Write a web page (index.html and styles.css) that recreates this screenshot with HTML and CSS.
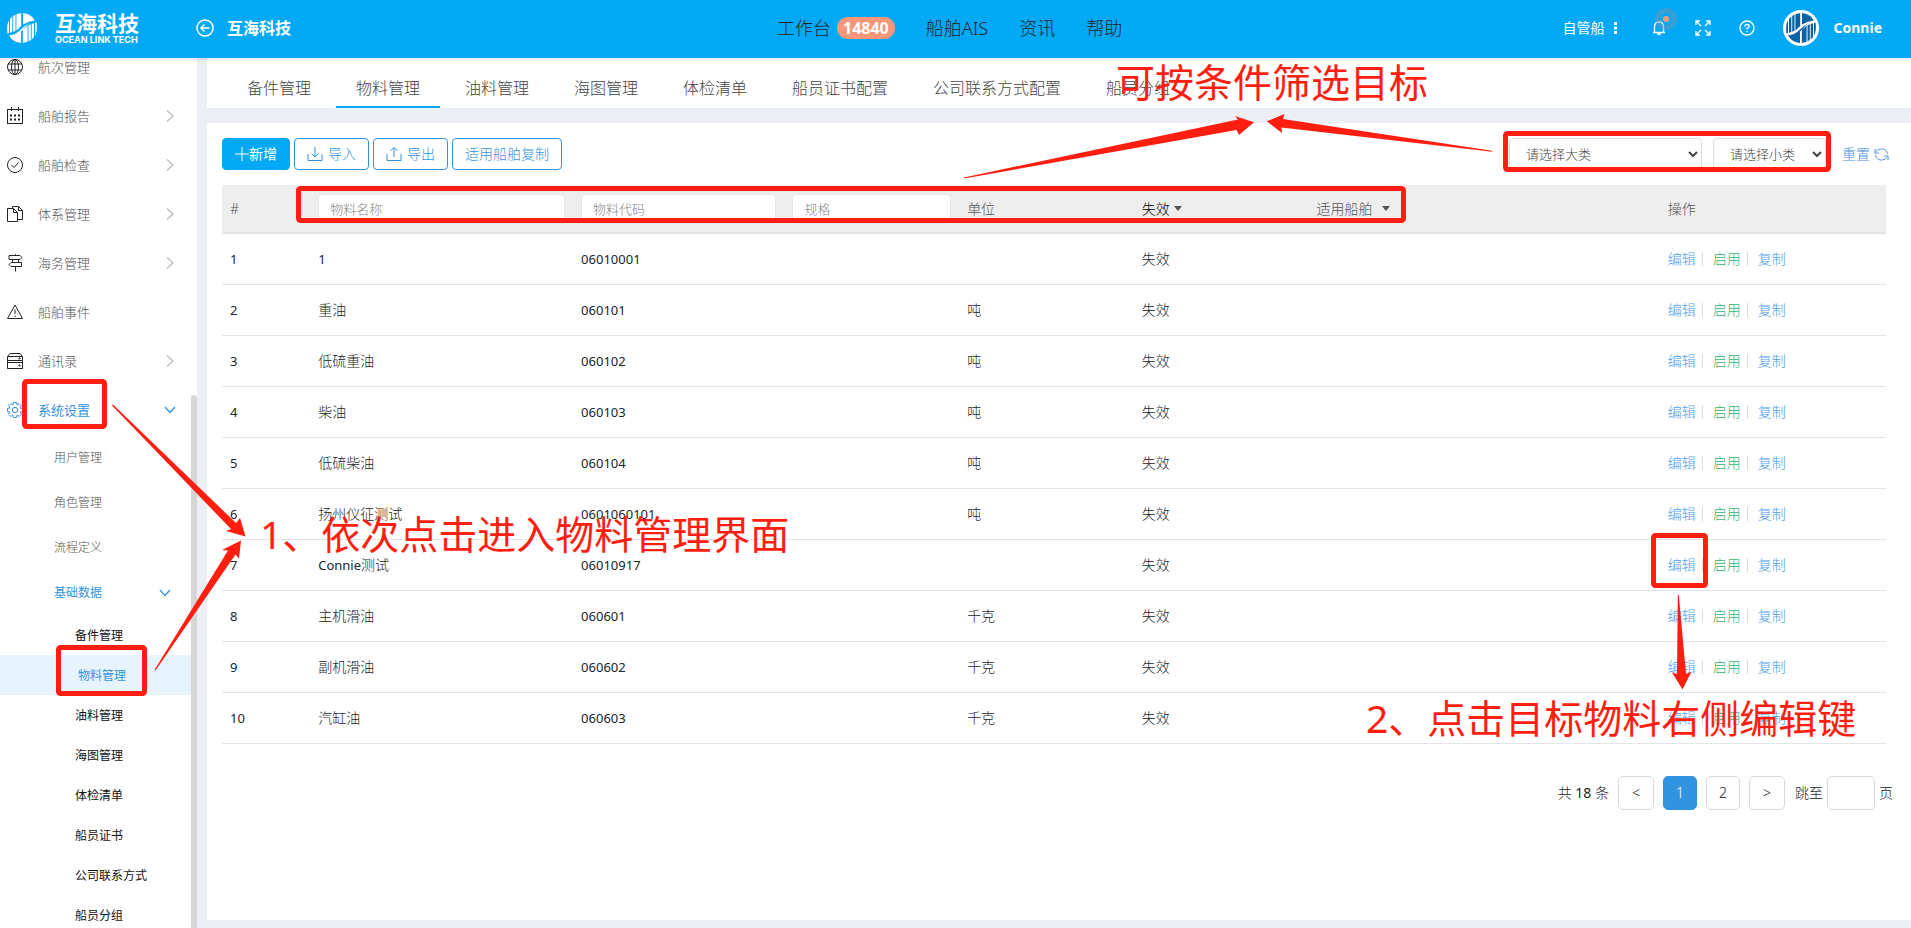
FILE: index.html
```html
<!DOCTYPE html>
<html lang="zh-CN">
<head>
<meta charset="utf-8">
<title>互海科技 - 物料管理</title>
<link rel="stylesheet" href="styles.css">
</head>
<body>
<svg class="defs" aria-hidden="true">
  <symbol id="mark" viewBox="0 0 30 30">
    <path d="M.5 11.500Q1 9 2 7.500V20L.5 20.500Q-.3 16 .5 11.500Z M3 6L5.300 3.600V19L3 19.800Z M6.200 2.900L8.500 1.600V17.800L6.200 18.800Z M9.400 1.200L14.200 .100V13L9.400 17.400Z"/>
    <path d="M16 .100Q24 .700 28 7.500Q22 8 16 11.500Z"/>
    <path d="M7 21.500Q11 19.500 14 16.500Q17 13 23 9.800Q19 12.500 16.500 16Q13 20.500 7 21.500Z"/>
    <path d="M14 29.900Q6 29.300 2 22.500Q8 22 14 18.500Z"/>
    <path d="M29.500 18.500Q29 21 28 22.500V10L29.500 9.500Q30.300 14 29.500 18.500Z M27 24L24.700 26.400V11L27 10.200Z M23.800 27.100L21.500 28.400V12.200L23.800 11.200Z M20.600 28.800L15.800 29.900V17L20.600 12.600Z"/>
  </symbol>
  <symbol id="right" viewBox="0 0 8 14"><path d="M1 1.500L7 7L1 12.500"/></symbol>
  <symbol id="down" viewBox="0 0 12 8"><path d="M1 1L6 6.500L11 1"/></symbol>
</svg>

<header class="header">
  <div class="brand">
    <svg class="brand-mark"><use href="#mark"/></svg>
    <div class="brand-text"><strong>互海科技</strong><span>OCEAN LINK TECH</span></div>
  </div>
  <a class="company" href="#">
    <svg viewBox="0 0 18 18" class="icon18"><circle cx="9" cy="9" r="8"/><path d="M13.500 9H5M8.500 5.500L5 9L8.500 12.500"/></svg>
    <span>互海科技</span>
  </a>
  <nav class="nav">
    <a href="#">工作台<span class="count">14840</span></a>
    <a href="#">船舶AIS</a>
    <a href="#">资讯</a>
    <a href="#">帮助</a>
  </nav>
  <div class="tools">
    <button class="fleet" type="button">自管船
      <svg viewBox="0 0 4 12"><rect width="3" height="3"/><rect y="4.500" width="3" height="3"/><rect y="9" width="3" height="3"/></svg>
    </button>
    <button class="bell" type="button" aria-label="通知">
      <svg viewBox="0 0 16 16"><path d="M2 12.500H14M3.500 12V7Q3.500 2 8 2T12.500 7V12M6.300 13.500Q8 15.500 9.700 13.500M8 2V.800"/></svg>
      <span class="pulse"></span>
    </button>
    <button type="button" aria-label="全屏">
      <svg viewBox="0 0 16 16"><path d="M1 5V1H5M1 1L6 6M11 1H15V5M15 1L10 6M1 11V15H5M1 15L6 10M15 11V15H11M15 15L10 10"/></svg>
    </button>
    <button type="button" aria-label="帮助">
      <svg viewBox="0 0 16 16"><circle cx="8" cy="8" r="7"/><path d="M5.800 6.500Q5.800 4.300 8 4.300T10.200 6.300Q10.200 7.500 8 8.300V9.500M8 11V12.300"/></svg>
    </button>
    <a class="user" href="#"><span class="avatar"><svg><use href="#mark"/></svg></span>Connie</a>
  </div>
</header>

<div class="layout">
  <aside class="sidebar">
    <ul class="menu">
      <li><a href="#"><svg class="mi" viewBox="0 0 18 18"><circle cx="9" cy="9" r="7.500"/><ellipse cx="9" cy="9" rx="3.500" ry="7.500"/><path d="M9 1.500V16.500M2 6H16M2 12H16"/></svg><span>航次管理</span></a></li>
      <li><a href="#"><svg class="mi" viewBox="0 0 18 18"><rect x="1.500" y="2.500" width="15" height="14"/><path d="M5.500 0V4M12.500 0V4"/><path stroke-dasharray="2 2" stroke-width="2" d="M4 8.500H14M4 12.500H14"/></svg><span>船舶报告</span><svg class="ch"><use href="#right"/></svg></a></li>
      <li><a href="#"><svg class="mi" viewBox="0 0 18 18"><circle cx="9" cy="9" r="7.500"/><path d="M5.500 9L8 11.500L12.500 6.500"/></svg><span>船舶检查</span><svg class="ch"><use href="#right"/></svg></a></li>
      <li><a href="#"><svg class="mi" viewBox="0 0 18 18"><path d="M1.500 3.500H7.500L11.500 7.500V16.500H1.500ZM7.500 3.500V7.500H11.500M6.500 3V1.500H12.500L16.500 5.500V14.500H12M12.500 1.500V5.500H16.500"/></svg><span>体系管理</span><svg class="ch"><use href="#right"/></svg></a></li>
      <li><a href="#"><svg class="mi" viewBox="0 0 18 18"><path d="M3 1.500H14L16 3.500L14 5.500H3ZM15.500 8.500H5L3 10.500L5 12.500H15.500ZM6.500 5.500V8.500M12.500 5.500V8.500M9.500 .200V1.500M9.500 12.500V17.500"/></svg><span>海务管理</span><svg class="ch"><use href="#right"/></svg></a></li>
      <li><a href="#"><svg class="mi" viewBox="0 0 18 18"><path d="M9 2L16.500 15.500H1.500ZM9 6.500V11M9 12.500V14"/></svg><span>船舶事件</span></a></li>
      <li><a href="#"><svg class="mi" viewBox="0 0 18 18"><path d="M1.500 8.500V4.500L4 1.500H14L16.500 4.500V8.500ZM1.500 4.500H16.500M1.500 10.500H16.500V16.500H1.500ZM1.500 8.500V16.500M16.500 8.500V16.500"/><circle cx="13.500" cy="6.500" r=".7"/><circle cx="13.500" cy="13.500" r=".7"/></svg><span>通讯录</span><svg class="ch"><use href="#right"/></svg></a></li>
      <li class="open"><a href="#"><svg class="mi" viewBox="0 0 18 18"><circle cx="9" cy="9" r="2.700"/><path d="M7.500 1.500H10.500L11 3.800L13.300 2.600L15.400 4.700L14.200 7L16.500 7.500V10.500L14.200 11L15.400 13.300L13.300 15.400L11 14.200L10.500 16.500H7.500L7 14.200L4.700 15.400L2.600 13.300L3.800 11L1.500 10.500V7.500L3.800 7L2.600 4.700L4.700 2.600L7 3.800Z"/></svg><span>系统设置</span><svg class="ch"><use href="#down"/></svg></a>
        <ul class="sub">
          <li><a href="#">用户管理</a></li>
          <li><a href="#">角色管理</a></li>
          <li><a href="#">流程定义</a></li>
          <li><a class="on" href="#">基础数据<svg class="ch"><use href="#down"/></svg></a>
            <ul class="leaf">
              <li><a href="#">备件管理</a></li>
              <li><a class="current" href="#">物料管理</a></li>
              <li><a href="#">油料管理</a></li>
              <li><a href="#">海图管理</a></li>
              <li><a href="#">体检清单</a></li>
              <li><a href="#">船员证书</a></li>
              <li><a href="#">公司联系方式</a></li>
              <li><a href="#">船员分组</a></li>
            </ul>
          </li>
        </ul>
      </li>
    </ul>
    <div class="thumb"></div>
  </aside>

  <main class="main">
    <nav class="tabs">
      <a href="#">备件管理</a><a class="active" href="#">物料管理</a><a href="#">油料管理</a><a href="#">海图管理</a><a href="#">体检清单</a><a href="#">船员证书配置</a><a href="#">公司联系方式配置</a><a href="#">船员分组</a>
    </nav>
    <section class="panel">
      <div class="toolbar">
        <button class="btn primary" type="button"><svg viewBox="0 0 14 14"><path d="M7 0V14M0 7H14"/></svg>新增</button>
        <button class="btn" type="button"><svg class="io" viewBox="0 0 16 16"><path d="M1 8V14.500H15V8M8 1V11M4.500 7.500L8 11L11.500 7.500"/></svg>导入</button>
        <button class="btn" type="button"><svg class="io" viewBox="0 0 16 16"><path d="M1 8V14.500H15V8M8 11V1.500M4.500 5L8 1.500L11.500 5"/></svg>导出</button>
        <button class="btn" type="button">适用船舶复制</button>
        <div class="filters">
          <select class="big" aria-label="大类"><option>请选择大类</option></select>
          <select class="small" aria-label="小类"><option>请选择小类</option></select>
          <a class="reset" href="#">重置<svg viewBox="0 0 16 16"><path d="M1 2V6.500H5.500M1.300 6Q3.500 2 8 2Q13.500 2.300 14.500 7.500M15 14V9.500H10.500M14.700 10Q12.500 14 8 14Q2.500 13.700 1.500 8.500"/></svg></a>
        </div>
      </div>

      <table class="grid">
        <colgroup><col class="c-no"><col class="c-name"><col class="c-code"><col class="c-mid"><col class="c-mid"><col class="c-mid"><col class="c-ship"><col class="c-act"></colgroup>
        <thead>
          <tr>
            <th>#</th>
            <th><input type="text" placeholder="物料名称" aria-label="物料名称"></th>
            <th><input type="text" placeholder="物料代码" aria-label="物料代码"></th>
            <th><input type="text" placeholder="规格" aria-label="规格"></th>
            <th>单位</th>
            <th><button class="drop dark" type="button">失效<i></i></button></th>
            <th><button class="drop wide" type="button">适用船舶<i></i></button></th>
            <th>操作</th>
          </tr>
        </thead>
        <tbody>
          <tr><td>1</td><td><span class="latin">1</span></td><td>06010001</td><td></td><td></td><td>失效</td><td></td><td class="acts"><a href="#">编辑</a><a href="#">启用</a><a href="#">复制</a></td></tr>
          <tr><td>2</td><td>重油</td><td>060101</td><td></td><td>吨</td><td>失效</td><td></td><td class="acts"><a href="#">编辑</a><a href="#">启用</a><a href="#">复制</a></td></tr>
          <tr><td>3</td><td>低硫重油</td><td>060102</td><td></td><td>吨</td><td>失效</td><td></td><td class="acts"><a href="#">编辑</a><a href="#">启用</a><a href="#">复制</a></td></tr>
          <tr><td>4</td><td>柴油</td><td>060103</td><td></td><td>吨</td><td>失效</td><td></td><td class="acts"><a href="#">编辑</a><a href="#">启用</a><a href="#">复制</a></td></tr>
          <tr><td>5</td><td>低硫柴油</td><td>060104</td><td></td><td>吨</td><td>失效</td><td></td><td class="acts"><a href="#">编辑</a><a href="#">启用</a><a href="#">复制</a></td></tr>
          <tr><td>6</td><td>扬州仪征测试</td><td>0601060101</td><td></td><td>吨</td><td>失效</td><td></td><td class="acts"><a href="#">编辑</a><a href="#">启用</a><a href="#">复制</a></td></tr>
          <tr><td>7</td><td><span class="latin">Connie</span>测试</td><td>06010917</td><td></td><td></td><td>失效</td><td></td><td class="acts"><a href="#">编辑</a><a href="#">启用</a><a href="#">复制</a></td></tr>
          <tr><td>8</td><td>主机滑油</td><td>060601</td><td></td><td>千克</td><td>失效</td><td></td><td class="acts"><a href="#">编辑</a><a href="#">启用</a><a href="#">复制</a></td></tr>
          <tr><td>9</td><td>副机滑油</td><td>060602</td><td></td><td>千克</td><td>失效</td><td></td><td class="acts"><a href="#">编辑</a><a href="#">启用</a><a href="#">复制</a></td></tr>
          <tr><td>10</td><td>汽缸油</td><td>060603</td><td></td><td>千克</td><td>失效</td><td></td><td class="acts"><a href="#">编辑</a><a href="#">启用</a><a href="#">复制</a></td></tr>
        </tbody>
      </table>

      <div class="pager">
        <span class="total">共 <b>18</b> 条</span>
        <button class="prev" type="button">&lt;</button>
        <button class="page active" type="button">1</button>
        <button class="page" type="button">2</button>
        <button class="next" type="button">&gt;</button>
        <label for="jump">跳至</label><input id="jump" type="text"><span>页</span>
      </div>
    </section>
  </main>
</div>

<div class="notes">
  <svg class="marks" aria-hidden="true">
    <g class="boxes">
      <rect x="24.500" y="381.500" width="80" height="45" rx="2"/>
      <rect x="58.500" y="647.500" width="86" height="46" rx="2"/>
      <rect x="298.500" y="188.500" width="1105" height="32" rx="2"/>
      <rect x="1505.500" y="133.500" width="323" height="36" rx="2"/>
      <rect x="1653.500" y="535.500" width="52" height="50" rx="2"/>
    </g>
    <path d="M112 405.500L113 404.500L236 523L240 518L245.500 536.500L226 531L231 529Z
      M154.500 670L155.500 670.500L235.500 554.500L239 558.500L241 540.500L222 550L228 550.500Z
      M964 177.500V178.500L1236.500 130L1239 135L1254 122.300L1235 116L1238 119.500Z
      M1492 150.800V151.800L1281.500 127.500L1282 133L1266.700 121.300L1284.500 114L1283 119Z
      M1677.800 595H1678.800L1686 674L1691.500 671.500L1682.500 689.500L1672 672.500L1677 674Z"/>
  </svg>
  <p class="note n1">1、依次点击进入物料管理界面</p>
  <p class="note n2">2、点击目标物料右侧编辑键</p>
  <p class="note n3">可按条件筛选目标</p>
</div>
</body>
</html>
```
FILE: styles.css
```css
* { box-sizing: border-box; }
html, body { height: 100%; }
body {
  margin: 0;
  position: relative;
  display: flex;
  flex-direction: column;
  overflow: hidden;
  background: #ecf0f5;
  color: #212529;
  font: 300 14px/20px "Noto Sans", "Noto Sans CJK SC", sans-serif;
}
ul { margin: 0; padding: 0; list-style: none; }
a { color: inherit; text-decoration: none; }
button, input, select { font: inherit; color: inherit; }
button { padding: 0; border: 0; background: none; }
svg { flex: none; fill: none; stroke: currentColor; }
.defs { position: absolute; width: 0; height: 0; }

.header {
  flex: none;
  display: flex;
  align-items: center;
  height: 58px;
  padding: 0 29px 2px 7px;
  position: relative;
  z-index: 2;
  background: #04a9f5;
  color: #fff;
  box-shadow: 0 1px 3px rgba(0, 0, 0, .15);
}
.brand { display: flex; align-items: center; gap: 18px; width: 189px; }
.brand-mark { width: 30px; height: 30px; fill: #fff; stroke: none; }
.brand-text { display: flex; flex-direction: column; white-space: nowrap; }
.brand-text strong { font-size: 21px; line-height: 24px; font-weight: 700; }
.brand-text span { font: 700 9px/10px Inter, sans-serif; }
.company { display: flex; align-items: center; gap: 13px; font-size: 16px; font-weight: 700; }
.icon18 { width: 18px; height: 18px; stroke-width: 1.5; }
.nav {
  flex: 1;
  display: flex;
  gap: 31px;
  margin-left: 486px;
  color: #212529;
  font-size: 18px;
  line-height: 22px;
}
.nav a { display: flex; align-items: center; }
.count {
  margin-left: 6px;
  padding: 0 6px;
  border-radius: 11px;
  background: #fc9678;
  color: #fff;
  font-size: 16px;
  font-weight: 700;
}
.tools { display: flex; align-items: center; }
.tools button { display: flex; align-items: center; position: relative; margin-right: 28px; }
.tools svg { width: 16px; height: 16px; stroke-width: 1.3; }
.tools .fleet { gap: 9px; margin-right: 33px; font-weight: 400; }
.tools .fleet svg { width: 4px; height: 12px; fill: #fff; stroke: none; }
.pulse {
  position: absolute;
  left: 4px;
  top: -12px;
  width: 22px;
  height: 22px;
  border: 5px solid rgba(110, 150, 180, .5);
  border-radius: 50%;
}
.pulse::after {
  content: "";
  position: absolute;
  left: 3px;
  top: 3px;
  width: 6px;
  height: 6px;
  border-radius: 50%;
  background: #fc9678;
}
.user { display: flex; align-items: center; gap: 15px; font-weight: 700; }
.tools .avatar { display: flex; padding: 3px; border-radius: 50%; background: #fff; color: #0a64a4; }
.tools .avatar svg { width: 30px; height: 30px; fill: currentColor; stroke: none; }

.layout { flex: 1; min-height: 0; display: flex; }
.sidebar { position: relative; flex: none; width: 197px; overflow: hidden; background: #fff; }
.menu { margin-top: -16px; color: #555; font-size: 13px; }
.menu > li > a { display: flex; align-items: center; height: 49px; padding: 0 23px 0 6px; }
.mi { width: 18px; height: 18px; margin-right: 14px; color: #212529; }
.ch { width: 8px; height: 14px; margin-left: auto; color: #bbb; stroke-width: 1.3; }
.menu .open > a, .menu .open .mi, .on, .sub .ch, .open > a .ch { color: #3294e1; }
.open > a span, .on { font-weight: 400; }
.open .ch { width: 12px; height: 8px; }
.menu > .open > a { padding-right: 21px; }
.sub { padding-top: 1px; font-size: 12px; }
.sub > li > a { display: flex; align-items: center; height: 45px; padding: 0 26px 0 54px; }
.leaf { margin-right: 6px; color: #111; font-weight: 400; }
.leaf a { display: block; height: 40px; padding-left: 75px; line-height: 42px; }
.leaf .current { padding-left: 78px; background: #e7f4fe; color: #3294e1; }
.thumb {
  position: absolute;
  right: 0;
  top: 337px;
  bottom: 0;
  width: 6px;
  border-radius: 3px 3px 0 0;
  background: #d6d6d6;
}

.main { flex: 1; min-width: 0; display: flex; flex-direction: column; gap: 15px; padding: 0 0 8px 10px; }
.tabs { display: flex; gap: 5px; height: 50px; padding-left: 20px; background: #fff; color: #444; font-size: 16px; }
.tabs a { padding: 0 20px; line-height: 60px; border-bottom: 2px solid transparent; white-space: nowrap; }
.tabs .active { border-color: #04a9f5; }
.panel { flex: 1; padding: 15px 25px 0 15px; background: #fff; }
.toolbar { display: flex; align-items: center; gap: 4px; margin-bottom: 15px; }
.btn {
  display: flex;
  align-items: center;
  height: 32px;
  padding: 0 12px;
  border: 1px solid #3294e1;
  border-radius: 4px;
  color: #3294e1;
}
.btn svg { width: 14px; height: 14px; }
.btn .io { width: 16px; height: 16px; margin-right: 5px; }
.btn.primary { border-color: #04a9f5; background: #04a9f5; color: #fff; font-weight: 400; }
.filters { display: flex; align-items: center; gap: 11px; margin: 0 -3px 0 auto; }
select {
  height: 32px;
  border: 1px solid #ddd;
  border-radius: 4px;
  background: #fff;
  padding: 0 0 0 12px;
  color: #444;
  font-size: 13px;
}
.big { width: 193px; }
.small { width: 113px; }
.reset { display: flex; align-items: center; gap: 4px; margin-left: 5px; color: #4a90e2; }
.reset svg { width: 15px; height: 15px; }

.grid { width: 100%; table-layout: fixed; border-collapse: collapse; }
.c-no { width: 5.3%; }
.c-name { width: 15.8%; }
.c-code { width: 12.7%; }
.c-mid { width: 10.5%; }
.c-ship { width: 21.1%; }
th { height: 48px; padding: 0 8px; border-bottom: 2px solid #e1e5ea; background: #eee; color: #555; font-weight: 300; text-align: left; }
td { height: 51px; padding: 0 8px; border-bottom: 1px solid #e3e6e9; white-space: nowrap; }
td:nth-child(1), td:nth-child(3), .latin { font-size: 13px; font-weight: 400; }
th input {
  display: block;
  width: 100%;
  height: 30px;
  padding: 0 11px;
  border: 1px solid #e4e6e8;
  border-radius: 4px;
  background: #fff;
  font-size: 13px;
}
::placeholder { color: #888; opacity: 1; }
.drop { display: flex; align-items: center; gap: 4px; }
.drop i { border: 4px solid transparent; border-top: 5px solid #555; border-bottom: 0; }
.dark { color: #000; }
.wide { gap: 9px; }
.acts { color: #4aa0ee; }
.acts a { display: inline-block; line-height: 14px; }
.acts a + a { margin-left: 6px; padding-left: 10px; border-left: 1px solid #d8dde2; }
.acts a:nth-child(2) { color: #2fb573; }

.pager { display: flex; align-items: center; justify-content: flex-end; gap: 9px; margin: 32px -7px 0 0; }
.pager b { font-weight: 400; }
.pager button, .pager input { width: 36px; height: 34px; border: 1px solid #d9d9d9; border-radius: 5px; background: #fff; }
.pager .page { width: 34px; }
.pager .active { border-color: #3294e1; background: #3294e1; color: #fff; }
.pager label { margin-left: 1px; }
.pager input { width: 48px; margin: 0 -5px; }

.notes { position: absolute; inset: 0; z-index: 3; pointer-events: none; color: #ff1e10; }
.marks { position: absolute; width: 100%; height: 100%; fill: #ff1e10; stroke: none; }
.boxes { fill: none; stroke: #ff1e10; stroke-width: 5; }
.note { position: absolute; margin: 0; font-size: 39px; line-height: 48px; font-weight: 400; white-space: nowrap; }
.n1 { left: 260px; top: 510px; }
.n2 { left: 1366px; top: 694px; }
.n3 { left: 1116px; top: 58px; }
```
